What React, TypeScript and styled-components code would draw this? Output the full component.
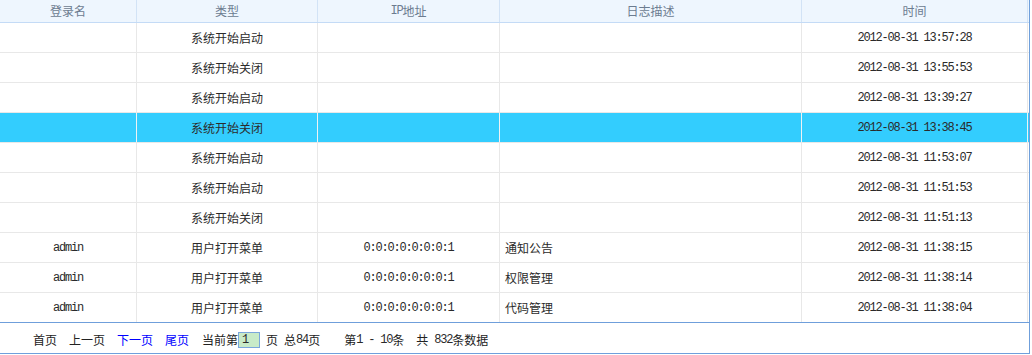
import React from "react";
import styled, { createGlobalStyle } from "styled-components";

const Global = createGlobalStyle`
  html, body { margin: 0; padding: 0; background: #fff; }
  body {
    font-family: "Noto Sans CJK SC", "Liberation Sans", sans-serif;
    font-size: 12px;
    color: #333;
  }
`;

const COLS = "137px 181px 182px 302px 226px";

const Panel = styled.div`
  width: 1029px;
  border-right: 1px solid #6f9fdb;
  background: #fff;
`;

const HeaderRow = styled.div`
  display: grid;
  grid-template-columns: ${COLS} 1px;
  height: 22px;
  background: #eef6fe;
  border-bottom: 1px solid #c4dbf6;
`;

const HeadCell = styled.div`
  display: flex;
  align-items: center;
  justify-content: center;
  border-right: 1px solid #d2e3f6;
  color: #6c7c90;
  font-size: 12px;
  line-height: 1;
  &:last-child { border-right: none; }
`;

const Row = styled.div<{ $selected?: boolean }>`
  display: grid;
  grid-template-columns: ${COLS};
  height: 29px;
  border-bottom: 1px solid #e8e8e8;
  background: ${(p) => (p.$selected ? "#33cdfe" : "#fff")};
  &:last-child { border-bottom: none; }
`;

const Cell = styled.div<{ $align?: "left" | "center"; $selected?: boolean }>`
  display: flex;
  align-items: center;
  justify-content: ${(p) => (p.$align === "left" ? "flex-start" : "center")};
  padding-left: ${(p) => (p.$align === "left" ? "5px" : "0")};
  border-right: 1px solid ${(p) => (p.$selected ? "#eef2f4" : "#e8e8e8")};
  color: #2b2b2b;
  font-size: 12px;
  line-height: 1;
  white-space: nowrap;
`;

const Num = styled.span<{ $muted?: boolean }>`
  font-family: "Liberation Mono", "DejaVu Sans Mono", monospace;
  font-size: 12px;
  letter-spacing: -1.2px;
  white-space: pre;
  color: ${(p) => (p.$muted ? "#6c7c90" : "#2a2a2a")};
`;

const Footer = styled.div`
  border-top: 1px solid #6f9fdb;
  border-bottom: 1px solid #6f9fdb;
  display: flex;
  align-items: center;
  padding: 3px 0 0 33px;
  box-sizing: border-box;
  height: 32px;
  color: #222;
`;

const PagerItem = styled.span<{ $link?: boolean; $gap?: number }>`
  margin-left: ${(p) => (p.$gap ?? 12)}px;
  color: ${(p) => (p.$link ? "#0000ff" : "#222")};
  white-space: nowrap;
  line-height: 1;
  display: inline-flex;
  align-items: center;
  &:first-child { margin-left: 0; }
`;

const PageInput = styled.span`
  display: inline-flex;
  align-items: center;
  box-sizing: border-box;
  width: 22px;
  height: 16px;
  padding-left: 3px;
  border: 1px solid #7aa7dc;
  background: #c8ebc8;
  color: #111;
  margin-right: 6px;
`;

type Log = { user: string; type: string; ip: string; desc: string; time: string };

const logs: Log[] = [
  { user: "", type: "系统开始启动", ip: "", desc: "", time: "2012-08-31 13:57:28" },
  { user: "", type: "系统开始关闭", ip: "", desc: "", time: "2012-08-31 13:55:53" },
  { user: "", type: "系统开始启动", ip: "", desc: "", time: "2012-08-31 13:39:27" },
  { user: "", type: "系统开始关闭", ip: "", desc: "", time: "2012-08-31 13:38:45" },
  { user: "", type: "系统开始启动", ip: "", desc: "", time: "2012-08-31 11:53:07" },
  { user: "", type: "系统开始启动", ip: "", desc: "", time: "2012-08-31 11:51:53" },
  { user: "", type: "系统开始关闭", ip: "", desc: "", time: "2012-08-31 11:51:13" },
  { user: "admin", type: "用户打开菜单", ip: "0:0:0:0:0:0:0:1", desc: "通知公告", time: "2012-08-31 11:38:15" },
  { user: "admin", type: "用户打开菜单", ip: "0:0:0:0:0:0:0:1", desc: "权限管理", time: "2012-08-31 11:38:14" },
  { user: "admin", type: "用户打开菜单", ip: "0:0:0:0:0:0:0:1", desc: "代码管理", time: "2012-08-31 11:38:04" },
];

export default function App() {
  return (
    <>
      <Global />
      <Panel>
        <HeaderRow>
          <HeadCell>登录名</HeadCell>
          <HeadCell>类型</HeadCell>
          <HeadCell><Num $muted>IP</Num>地址</HeadCell>
          <HeadCell>日志描述</HeadCell>
          <HeadCell>时间</HeadCell>
          <HeadCell />
        </HeaderRow>
        <div>
          {logs.map((l, i) => {
            const sel = i === 3;
            return (
              <Row key={i} $selected={sel}>
                <Cell $selected={sel}><Num>{l.user}</Num></Cell>
                <Cell $selected={sel}>{l.type}</Cell>
                <Cell $selected={sel}><Num>{l.ip}</Num></Cell>
                <Cell $selected={sel} $align="left">{l.desc}</Cell>
                <Cell $selected={sel}><Num>{l.time}</Num></Cell>
              </Row>
            );
          })}
        </div>
        <Footer>
          <PagerItem>首页</PagerItem>
          <PagerItem>上一页</PagerItem>
          <PagerItem $link>下一页</PagerItem>
          <PagerItem $link>尾页</PagerItem>
          <PagerItem $gap={13}>
            当前第<PageInput><Num>1</Num></PageInput>页
          </PagerItem>
          <PagerItem $gap={6}>总<Num>84</Num>页</PagerItem>
          <PagerItem $gap={24}>第<Num>1 - 10</Num>条</PagerItem>
          <PagerItem $gap={12}>共<Num>{" 832"}</Num>条数据</PagerItem>
        </Footer>
      </Panel>
    </>
  );
}
